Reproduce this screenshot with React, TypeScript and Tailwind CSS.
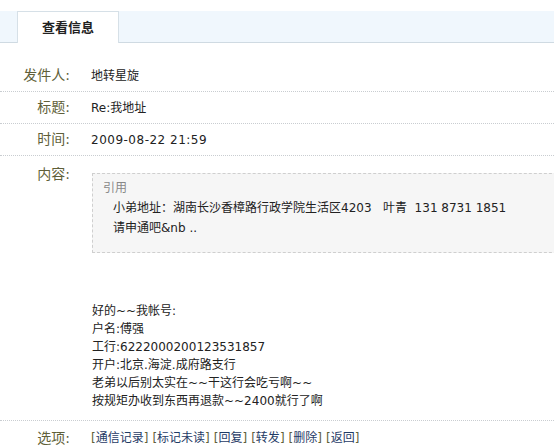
const font = "font-['DejaVu_Sans','Noto_Sans_CJK_SC',sans-serif]";

const Label = ({ children }: { children: React.ReactNode }) => (
  <div className="w-[70px] shrink-0 text-right text-[14px] text-[#5f5f39]">{children}</div>
);

const Row = ({ label, children }: { label: string; children: React.ReactNode }) => (
  <div className="flex items-center h-8 border-b border-dotted border-[#c9cdd1]">
    <Label>{label}</Label>
    <div className="ml-[21px] text-[12px] text-[#222]">{children}</div>
  </div>
);

const bodyLines = [
  "好的~~我帐号:",
  "户名:傅强",
  "工行:6222000200123531857",
  "开户:北京.海淀.成府路支行",
  "老弟以后别太实在~~干这行会吃亏啊~~",
  "按规矩办收到东西再退款~~2400就行了啊",
];

const actions = ["通信记录", "标记未读", "回复", "转发", "删除", "返回"];

export default function App() {
  return (
    <div className={`w-[554px] h-[447px] overflow-hidden bg-white ${font}`}>
      <div className="mt-[11px] h-[32px] flex items-end bg-[#f0f7fd] border-b border-[#cfdae2]">
        <div className="ml-[17px] w-[102px] h-[32px] -mb-px bg-white border border-b-0 border-[#d6e0e7] flex items-center justify-center">
          <span className="text-[13px] font-bold text-[#222]">查看信息</span>
        </div>
      </div>

      <div className="mt-[17px]">
        <Row label="发件人:">地转星旋</Row>
        <Row label="标题:">Re:我地址</Row>
        <Row label="时间:"><span className="tracking-[0.5px]">2009-08-22 21:59</span></Row>

        <div className="flex border-b border-dotted border-[#c9cdd1] pb-[10px]">
          <div className="pt-[8px]">
            <Label>内容:</Label>
          </div>
          <div className="ml-[22px] pt-[17px] text-[12px] text-[#222]">
            <div className="w-[480px] bg-[#f6f6f6] border border-dashed border-[#cfcfcf] pt-[4px] pb-[14px] pl-[10px]">
              <div className="leading-[20px] text-[#888]">引用</div>
              <div className="pl-[10px] leading-[20px] text-[#222] whitespace-pre">
                <div>小弟地址：湖南长沙香樟路行政学院生活区4203   叶青  131 8731 1851</div>
                <div>请申通吧&amp;nb ..</div>
              </div>
            </div>
            <div className="mt-[49px] leading-[18px]">
              {bodyLines.map((l) => (
                <div key={l}>{l}</div>
              ))}
            </div>
          </div>
        </div>

        <div className="flex items-center h-[34px]">
          <Label>选项:</Label>
          <div className="ml-[21px] text-[12px] flex gap-[4px]">
            {actions.map((a) => (
              <span key={a} className="text-[#5f5f39]">
                [<a className="text-[#1f3b66] cursor-pointer">{a}</a>]
              </span>
            ))}
          </div>
        </div>
      </div>
    </div>
  );
}
